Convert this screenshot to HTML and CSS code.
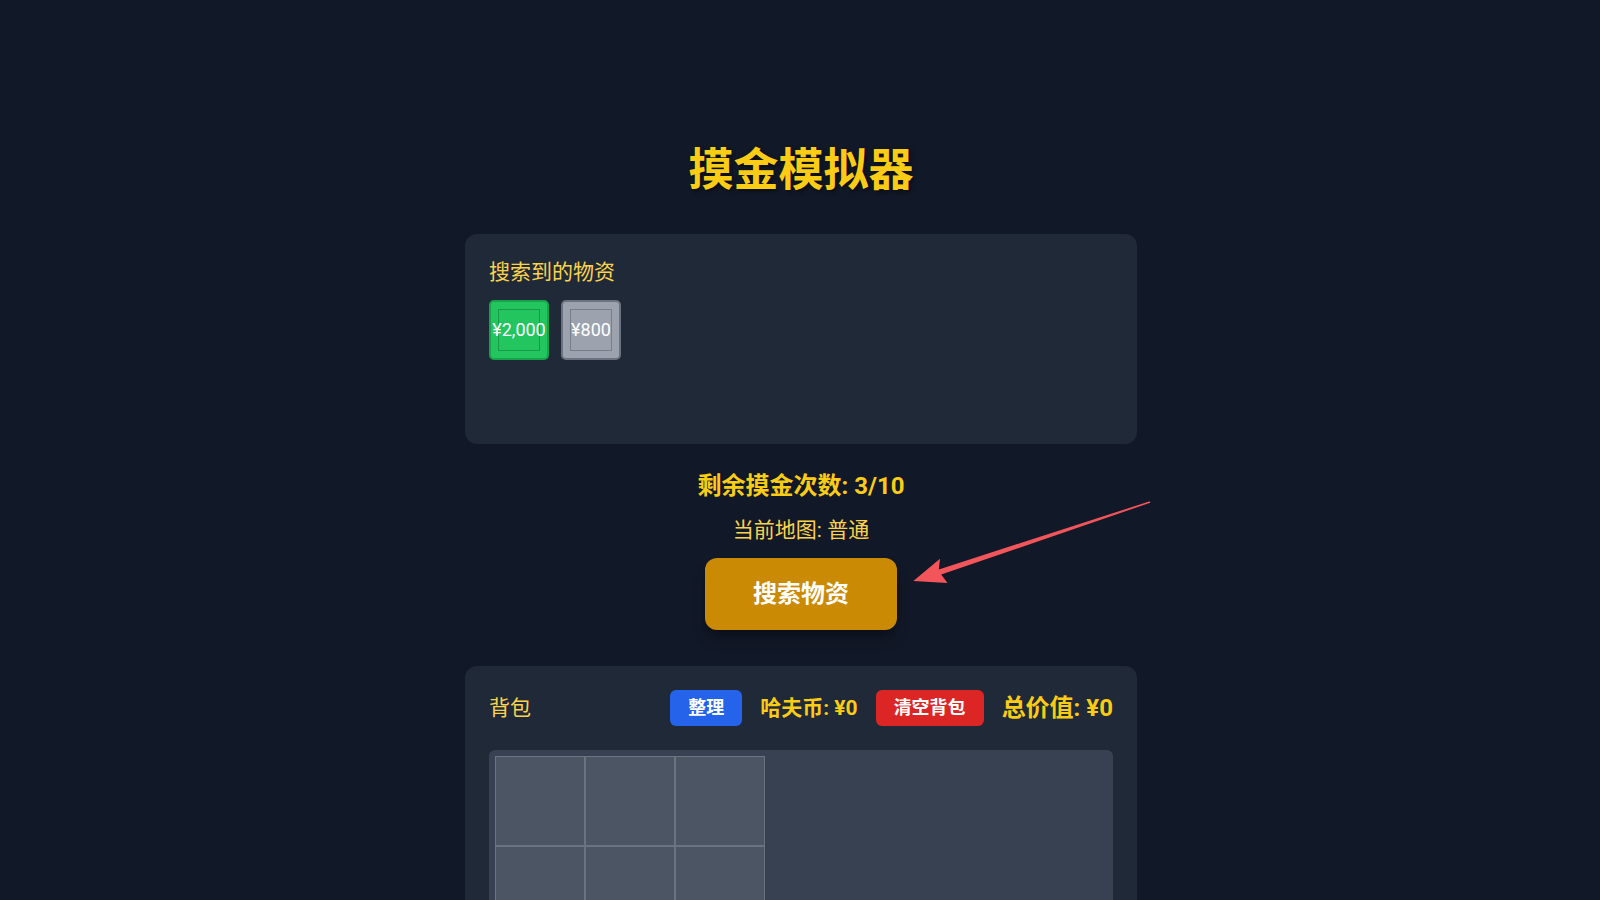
FILE: index.html
```html
<!DOCTYPE html>
<html lang="zh-CN">
<head>
<meta charset="utf-8">
<title>摸金模拟器</title>
<link rel="stylesheet" href="styles.css">
</head>
<body>
<main class="page">
  <h1 class="title">摸金模拟器</h1>

  <section class="panel loot-panel">
    <div class="panel-title">搜索到的物资</div>
    <div class="loot">
      <div class="item item-green"><span class="item-inner"></span><span class="item-value">¥2,000</span></div>
      <div class="item item-gray"><span class="item-inner"></span><span class="item-value">¥800</span></div>
    </div>
  </section>

  <div class="status">剩余摸金次数: 3/10</div>
  <div class="map">当前地图: 普通</div>
  <div class="action">
    <button class="search-btn">搜索物资</button>
  </div>

  <section class="panel bag-panel">
    <div class="bag-header">
      <div class="panel-title bag-title">背包</div>
      <div class="bag-tools">
        <button class="small-btn btn-blue">整理</button>
        <span class="coins">哈夫币: ¥0</span>
        <button class="small-btn btn-red">清空背包</button>
        <span class="total">总价值: ¥0</span>
      </div>
    </div>
    <div class="bag-area">
      <div class="bag-grid">
        <div class="cell"></div><div class="cell"></div><div class="cell"></div>
        <div class="cell"></div><div class="cell"></div><div class="cell"></div>
        <div class="cell"></div><div class="cell"></div><div class="cell"></div>
        <div class="cell"></div><div class="cell"></div><div class="cell"></div>
      </div>
    </div>
  </section>
</main>

<svg class="annot" width="1600" height="900" viewBox="0 0 1600 900" aria-hidden="true">
  <polygon fill="#f2555a" points="1149.8,501.3 1150.3,502.7 941.2,574.6 947.5,583 913.3,581 940,558.8 938.8,569.4"/>
</svg>
</body>
</html>
```

FILE: styles.css
```css
html, body {
  margin: 0;
  padding: 0;
  overflow: hidden;
}

body {
  background: #111827;
  font-family: Roboto, "Noto Sans CJK SC", "Noto Sans", sans-serif;
  color: #fff;
  position: relative;
  min-height: 900px;
}

.page {
  width: 672px;
  margin-left: calc(50% - 335px);
  padding-top: 143px;
}

.title {
  margin: 0 0 35px;
  font-size: 45px;
  line-height: 56px;
  font-weight: 700;
  text-align: center;
  color: #facc15;
  text-shadow: 2px 2px 4px rgba(0, 0, 0, 0.5);
}

.panel {
  background: #1f2937;
  border-radius: 12px;
  padding: 24px;
}

.panel-title {
  font-size: 21px;
  line-height: 28px;
  color: #fcd34d;
}

.loot-panel .panel-title {
  margin-bottom: 14px;
}

.loot {
  display: flex;
  gap: 12px;
  align-items: flex-start;
  min-height: 120px;
}

.item {
  position: relative;
  width: 60px;
  height: 60px;
  box-sizing: border-box;
  border: 2px solid;
  border-radius: 5px;
  display: flex;
  align-items: center;
  justify-content: center;
}

.item-green {
  background: #22c55e;
  border-color: #16a34a;
}

.item-gray {
  background: #9ca3af;
  border-color: #6b7280;
}

.item-inner {
  position: absolute;
  left: 7px;
  top: 7px;
  width: 42px;
  height: 42px;
  box-sizing: border-box;
  border: 1px solid rgba(0, 0, 0, 0.22);
}

.item-value {
  position: relative;
  font-size: 18px;
  line-height: 20px;
  color: #fff;
  white-space: nowrap;
}

.status {
  margin-top: 26px;
  font-size: 24px;
  line-height: 32px;
  font-weight: 700;
  text-align: center;
  color: #facc15;
}

.map {
  margin-top: 14px;
  font-size: 21px;
  line-height: 28px;
  text-align: center;
  color: #fcd34d;
}

.action {
  margin-top: 14px;
  display: flex;
  justify-content: center;
}

.search-btn {
  border: 0;
  background: #ca8a04;
  color: #fff;
  font-family: inherit;
  font-size: 24px;
  line-height: 32px;
  font-weight: 700;
  padding: 20px 48px;
  border-radius: 12px;
  box-shadow: 0 10px 15px -3px rgba(0, 0, 0, 0.3), 0 4px 6px -4px rgba(0, 0, 0, 0.3);
}

.bag-panel {
  margin-top: 36px;
}

.bag-header {
  display: flex;
  justify-content: space-between;
  align-items: center;
  height: 36px;
  margin-bottom: 24px;
}

.bag-tools {
  display: flex;
  align-items: center;
  gap: 18px;
}

.small-btn {
  border: 0;
  color: #fff;
  font-family: inherit;
  font-size: 18px;
  line-height: 28px;
  font-weight: 700;
  padding: 4px 18px;
  border-radius: 6px;
}

.btn-blue {
  background: #2563eb;
}

.btn-red {
  background: #dc2626;
}

.coins {
  font-size: 21px;
  line-height: 28px;
  font-weight: 700;
  color: #facc15;
}

.total {
  font-size: 24px;
  line-height: 32px;
  font-weight: 700;
  color: #facc15;
}

.bag-area {
  background: #374151;
  border-radius: 6px;
  padding: 6px;
  min-height: 400px;
}

.bag-grid {
  display: grid;
  grid-template-columns: repeat(3, 90px);
  grid-auto-rows: 90px;
}

.cell {
  background: #4b5563;
  border: 1px solid #6b7280;
}

.annot {
  position: absolute;
  left: 0;
  top: 0;
  pointer-events: none;
}
```
